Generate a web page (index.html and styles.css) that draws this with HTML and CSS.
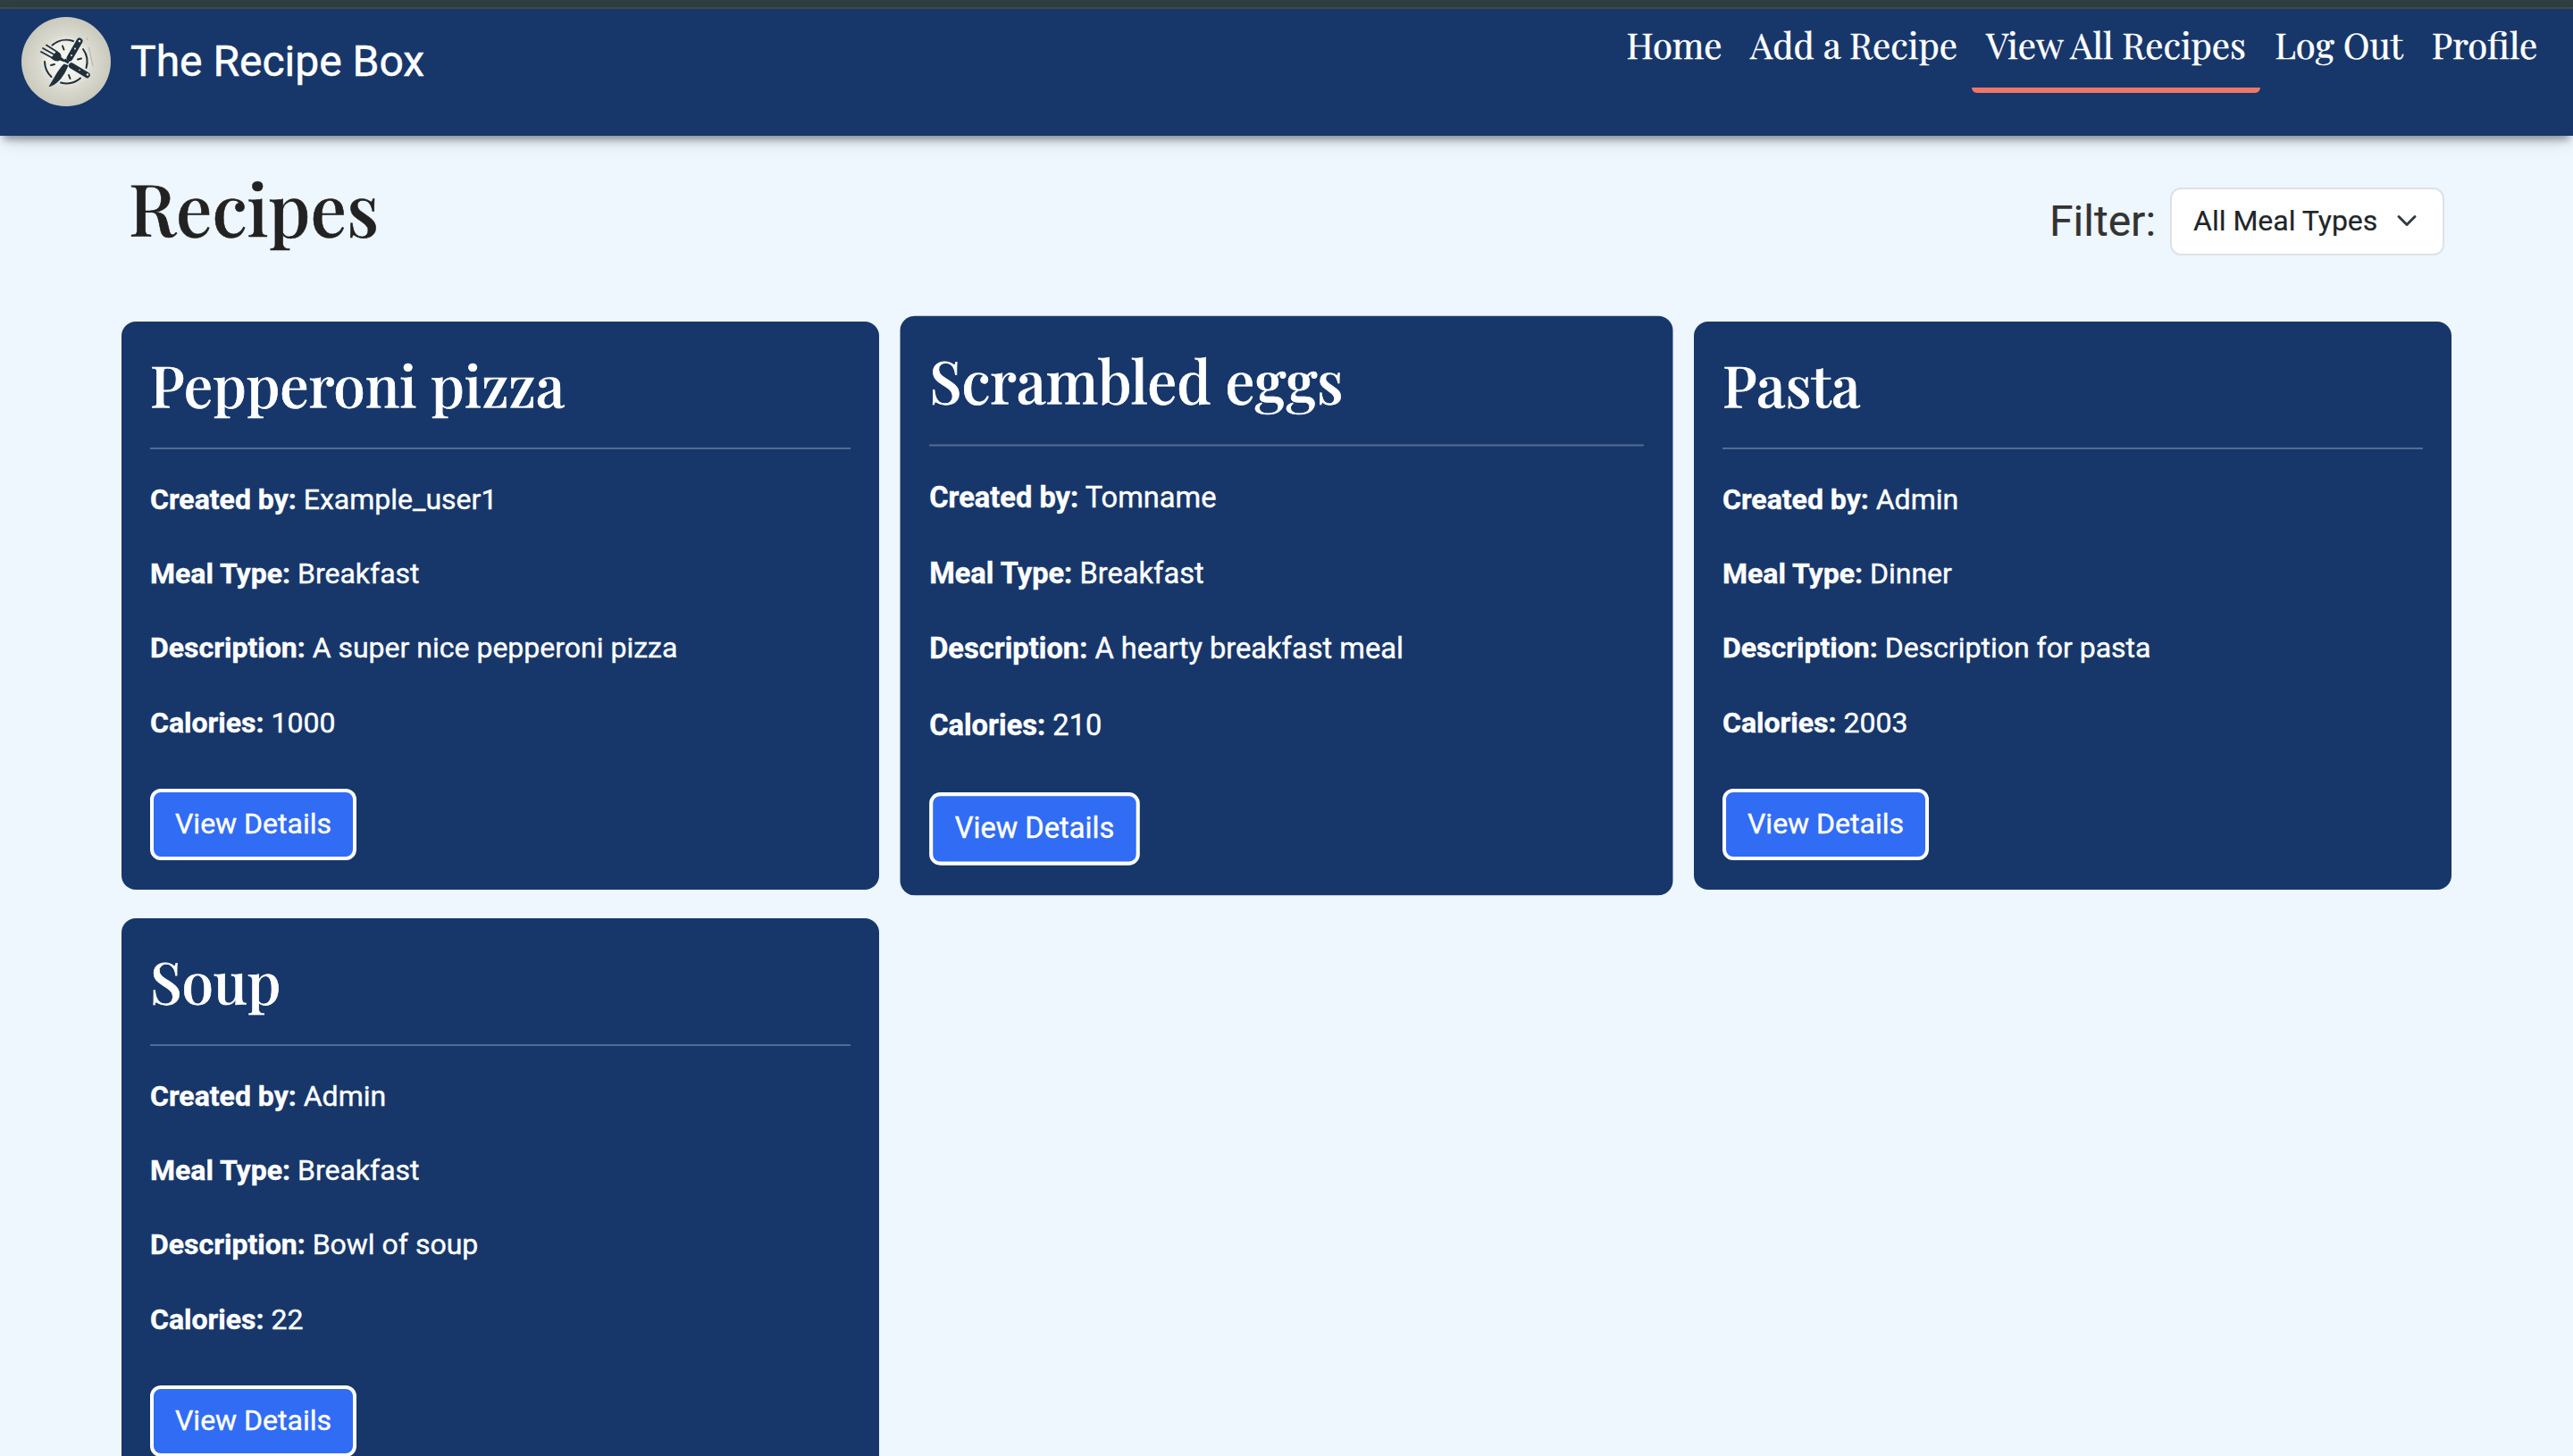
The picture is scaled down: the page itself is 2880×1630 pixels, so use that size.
FILE: index.html
```html
<!DOCTYPE html>
<html lang="en">
<head>
<meta charset="utf-8">
<title>The Recipe Box</title>
<link rel="stylesheet" href="styles.css">
</head>
<body>
<div class="top-strip"></div>
<header class="navbar">
  <a class="brand">
    <svg class="logo" viewBox="0 0 100 100" aria-hidden="true">
      <defs>
        <radialGradient id="plate" cx="50%" cy="50%" r="50%">
          <stop offset="0" stop-color="#fafaf6"/>
          <stop offset=".42" stop-color="#eeeee7"/>
          <stop offset=".6" stop-color="#dadad0"/>
          <stop offset="1" stop-color="#c9c9bd"/>
        </radialGradient>
      </defs>
      <circle cx="50" cy="50" r="50" fill="url(#plate)"/>
      <g fill="none" stroke="#20303a" stroke-width="2" stroke-linecap="round">
        <path d="M34.5 31.5A24 24 0 0 1 58 27M69 36A24 24 0 0 1 72.500 57M66 68.500A24 24 0 0 1 44 73.500M33.500 67A24 24 0 0 1 26 50"/>
        <path d="M46 32.500L47.500 36.500M63 47.500L67 46.500M33 54L37 53M53 65L54.500 69"/>
        <path d="M22 39L34 45.500M24 35L36.500 42M28 31.500L40.500 39.500" stroke-width="1.8"/>
      </g>
      <path d="M33 46C37 50 41 50 43 48.500L48 50.500L49 48.500L44.500 45C45 41 42 39 39 38.500Z" fill="#20303a"/>
      <path d="M65 27L54 46" stroke="#20303a" stroke-width="7" stroke-linecap="round"/>
      <path d="M56 54.500L73.500 65" stroke="#20303a" stroke-width="6.500" stroke-linecap="round"/>
      <path d="M47.500 52.500L52.500 54C50 62 41 77 30.500 78C34 73 40 60 47.500 52.500Z" fill="#20303a"/>
      <path d="M48 48L53 51" stroke="#20303a" stroke-width="3.500"/>
      <g fill="#e8e8e1">
        <circle cx="65" cy="27" r="1.300"/><circle cx="60" cy="35.500" r="1"/><circle cx="56" cy="43" r="1"/>
        <circle cx="74" cy="64.500" r="1.300"/><circle cx="65" cy="59.500" r=".8"/>
      </g>
      <path d="M73 23L74 26M75.500 34L80 55" stroke="#babbb4" stroke-width="1.300"/>
    </svg>
    <span class="brand-name">The Recipe Box</span>
  </a>
  <nav class="nav-links">
    <a class="nav-link">Home</a>
    <a class="nav-link">Add a Recipe</a>
    <a class="nav-link active">View All Recipes</a>
    <a class="nav-link">Log Out</a>
    <a class="nav-link">Profile</a>
  </nav>
</header>
<main class="page">
  <div class="page-head">
    <h1 class="page-title">Recipes</h1>
    <div class="filter">
      <span class="filter-label">Filter:</span>
      <div class="select">
        <span>All Meal Types</span>
        <svg class="chevron" viewBox="0 0 16 16" aria-hidden="true"><path d="m2 5 6 6 6-6" fill="none" stroke="#343a40" stroke-width="2" stroke-linecap="round" stroke-linejoin="round"/></svg>
      </div>
    </div>
  </div>
  <section class="cards">
    <article class="card">
      <h2 class="card-title">Pepperoni pizza</h2>
      <p><b>Created by:</b> Example_user1</p>
      <p><b>Meal Type:</b> Breakfast</p>
      <p><b>Description:</b> A super nice pepperoni pizza</p>
      <p><b>Calories:</b> 1000</p>
      <a class="btn">View Details</a>
    </article>
    <article class="card hovered">
      <h2 class="card-title">Scrambled eggs</h2>
      <p><b>Created by:</b> Tomname</p>
      <p><b>Meal Type:</b> Breakfast</p>
      <p><b>Description:</b> A hearty breakfast meal</p>
      <p><b>Calories:</b> 210</p>
      <a class="btn">View Details</a>
    </article>
    <article class="card">
      <h2 class="card-title">Pasta</h2>
      <p><b>Created by:</b> Admin</p>
      <p><b>Meal Type:</b> Dinner</p>
      <p><b>Description:</b> Description for pasta</p>
      <p><b>Calories:</b> 2003</p>
      <a class="btn">View Details</a>
    </article>
    <article class="card">
      <h2 class="card-title">Soup</h2>
      <p><b>Created by:</b> Admin</p>
      <p><b>Meal Type:</b> Breakfast</p>
      <p><b>Description:</b> Bowl of soup</p>
      <p><b>Calories:</b> 22</p>
      <a class="btn">View Details</a>
    </article>
  </section>
</main>
</body>
</html>
```
FILE: styles.css
```css
* { box-sizing: border-box; }
body {
  margin: 0;
  height: 1630px;
  overflow: hidden;
  background: #eef6fe;
  color: #222;
  font-family: Roboto, sans-serif;
  font-size: 32px;
}
.top-strip {
  height: 10px;
  background: #2d3f3e;
  border-bottom: 2px solid #454a45;
}
.navbar {
  height: 142px;
  padding: 0 24px;
  display: flex;
  justify-content: space-between;
  align-items: flex-start;
  background: #17376b;
  box-shadow: 0 8px 8px -4px rgba(0, 0, 0, .34), 0 8px 20px -4px rgba(0, 0, 0, .18);
}
.brand {
  display: flex;
  align-items: center;
  gap: 22px;
  padding-top: 9px;
  color: #fff;
}
.logo { width: 100px; height: 100px; }
.brand-name {
  font-size: 48px;
  line-height: 72px;
  -webkit-text-stroke: .5px #fff;
}
.nav-links {
  display: grid;
  grid-template-columns: 138px 264px 323px 176px 150px;
  font-family: "Playfair Display", "Liberation Serif", serif;
  font-size: 40px;
  color: #fff;
}
.nav-link {
  height: 94px;
  padding-top: 10px;
  line-height: 60px;
  text-align: center;
  white-space: nowrap;
  -webkit-text-stroke: .5px #fff;
}
.nav-link.active {
  border-bottom: 6px solid #ee7768;
  border-radius: 6px;
}
.page { padding: 0 136px; }
.page-head {
  height: 208px;
  padding: 0 8px;
  display: flex;
  justify-content: space-between;
  align-items: flex-start;
}
.page-title {
  margin: 32px 0 0;
  font-family: "Playfair Display", "Liberation Serif", serif;
  font-size: 80px;
  font-weight: 500;
  line-height: 96px;
  color: #222;
  -webkit-text-stroke: .6px #222;
}
.filter {
  display: flex;
  align-items: center;
  gap: 16px;
  padding-top: 58px;
}
.filter-label {
  font-size: 48px;
  line-height: 72px;
  color: #333;
  -webkit-text-stroke: .2px #333;
}
.select {
  width: 307px;
  height: 76px;
  padding: 0 28px 2px 24px;
  display: flex;
  align-items: center;
  justify-content: space-between;
  border: 2px solid #dee2e6;
  border-radius: 12px;
  background: #fff;
  color: #212529;
  -webkit-text-stroke: .2px #212529;
}
.chevron { width: 24px; height: 24px; }
.cards {
  display: grid;
  grid-template-columns: repeat(3, 848px);
  gap: 32px;
}
.card {
  height: 636px;
  padding: 32px;
  border-radius: 16px;
  background: #17376b;
  color: #fff;
  line-height: 51.2px;
}
.card.hovered { transform: scale(1.02); }
.card p {
  margin: 0 0 32px;
  -webkit-text-stroke: .4px #fff;
}
.card-title {
  height: 111px;
  margin: 0 0 31px;
  border-bottom: 2px solid #536b92;
  font-family: "Playfair Display", "Liberation Serif", serif;
  font-size: 64px;
  font-weight: 500;
  line-height: 75px;
  -webkit-text-stroke: .7px #fff;
}
.btn {
  display: flex;
  align-items: center;
  justify-content: center;
  width: 231px;
  height: 80px;
  margin-top: 48px;
  border: 4px solid #fff;
  border-radius: 12px;
  background: #316cf4;
  -webkit-text-stroke: .4px #fff;
}
```
